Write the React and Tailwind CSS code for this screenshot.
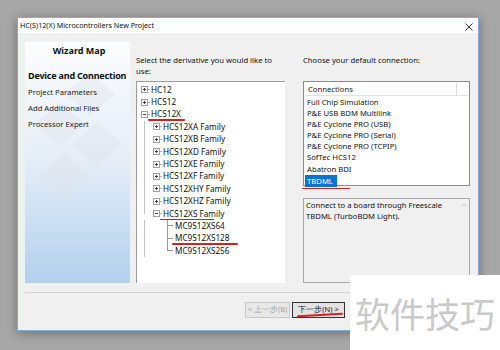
import React from "react";

const font = { fontFamily: '"Noto Sans", "Liberation Sans", sans-serif' };

const tree = [
    { label: "HC12", level: 0, box: "+" },
    { label: "HCS12", level: 0, box: "+" },
    { label: "HCS12X", level: 0, box: "-", mark: "w-[37px]" },
    { label: "HCS12XA Family", level: 1, box: "+" },
    { label: "HCS12XB Family", level: 1, box: "+" },
    { label: "HCS12XD Family", level: 1, box: "+" },
    { label: "HCS12XE Family", level: 1, box: "+" },
    { label: "HCS12XF Family", level: 1, box: "+" },
    { label: "HCS12XHY Family", level: 1, box: "+" },
    { label: "HCS12XHZ Family", level: 1, box: "+" },
    { label: "HCS12XS Family", level: 1, box: "-", last: true, mark: "w-[54px]" },
    { label: "MC9S12XS64", level: 2 },
    { label: "MC9S12XS128", level: 2, mark: "w-[66px]" },
    { label: "MC9S12XS256", level: 2, last: true },
];

const connections = [
    "Full Chip Simulation",
    "P&E USB BDM Multilink",
    "P&E Cyclone PRO (USB)",
    "P&E Cyclone PRO (Serial)",
    "P&E Cyclone PRO (TCPIP)",
    "SofTec HCS12",
    "Abatron BDI",
];

const ExpandBox = ({ sign }) => (
    <span className="relative flex h-[7px] w-[7px] shrink-0 items-center justify-center border border-[#a0a0a0] bg-white">
        <span className="absolute h-px w-[3px] bg-[#444]" />
        {sign === "+" && <span className="absolute h-[3px] w-px bg-[#444]" />}
    </span>
);

const TreeRow = ({ item }) => (
    <div className="relative flex h-[12.4px] items-center">
        {/* linea vertical del padre HCS12X */}
        {item.level >= 1 && (
            <span className={`absolute left-[7px] top-0 w-px bg-[#c4c4c4] ${item.level === 1 && item.last ? "h-1/2" : "h-full"}`} />
        )}
        <span className={item.level === 0 ? "w-[4px]" : item.level === 1 ? "w-[16px]" : "w-[28px]"} />
        {item.level === 2 ? (
            <span className="relative flex h-full w-[9px] shrink-0 items-center">
                <span className={`absolute left-[2px] top-0 w-px bg-[#9a9a9a] ${item.last ? "h-1/2" : "h-full"}`} />
                <span className="ml-[2px] h-px w-[6px] bg-[#9a9a9a]" />
            </span>
        ) : (
            <>
                <ExpandBox sign={item.box} />
                <span className="h-px w-[2px] bg-[#b0b0b0]" />
            </>
        )}
        <span className="relative ml-px whitespace-nowrap text-[8.2px] leading-none text-[#111]">
            {item.label}
            {item.mark && (
                <span className={`absolute left-[-3px] top-[9px] h-[1.5px] rounded-full bg-[#d62020] ${item.mark}`} />
            )}
        </span>
    </div>
);

const App = () => {
    return (
        <main className="relative h-[350px] w-[500px] overflow-hidden bg-[#a7a7a7] pl-[17px] pt-[17px]" style={font}>
            <div className="flex h-[314px] w-[462px] flex-col border border-[#86acd6] bg-[#f0f0f0] shadow-[0_2px_10px_rgba(0,0,0,0.35)]">
                {/* barra de titulo */}
                <div className="flex h-[15px] items-center justify-between bg-white pl-[2px] pr-[5px]">
                    <span className="text-[7.2px] leading-none text-[#111]">HC(S)12(X) Microcontrollers New Project</span>
                    <svg width="8" height="8" viewBox="0 0 8 8" className="mt-[2px]">
                        <path d="M0.5 0.5 L7.5 7.5 M7.5 0.5 L0.5 7.5" stroke="#222" strokeWidth="0.9" />
                    </svg>
                </div>

                <div className="flex pl-[7px] pt-[9px]">
                    {/* Wizard Map */}
                    <div className="relative flex h-[241px] w-[105px] flex-col bg-linear-to-b from-[#fcfdfe] via-[#e4edf7] to-[#b2d0ed] pl-[3px]">
                        <svg className="absolute left-[10px] top-[30px]" width="90" height="140" viewBox="0 0 90 140">
                            <g fill="#dfe4ea" opacity="0.4">
                                <path d="M55 0 L80 22 L55 44 L30 22 Z" />
                                <path d="M25 30 L50 52 L25 74 L0 52 Z" />
                                <path d="M62 50 L87 72 L62 94 L37 72 Z" />
                                <path d="M30 80 L55 102 L30 124 L5 102 Z" />
                            </g>
                        </svg>
                        <span className="relative pt-[3px] text-center text-[9px] font-bold leading-[12px] text-[#111]">Wizard Map</span>
                        <span className="relative mt-[13px] whitespace-nowrap text-[9px] font-bold leading-[12px] tracking-[-0.2px] text-[#111]">
                            Device and Connection
                        </span>
                        <span className="relative mt-[4px] text-[7.7px] leading-[12px] text-[#222]">Project Parameters</span>
                        <span className="relative mt-[4px] text-[7.7px] leading-[12px] text-[#222]">Add Additional Files</span>
                        <span className="relative mt-[4px] text-[7.7px] leading-[12px] text-[#222]">Processor Expert</span>
                    </div>

                    {/* derivado */}
                    <div className="ml-[6px] flex w-[149px] flex-col">
                        <p className="h-[39px] pt-[13px] text-[7.7px] leading-[11px] text-[#111]">
                            Select the derivative you would like to use:
                        </p>
                        <div className="h-[202px] border-l border-t border-[#9c9c9c] bg-white pt-[1.5px]">
                            {tree.map((item) => (
                                <TreeRow key={item.label} item={item} />
                            ))}
                        </div>
                    </div>

                    {/* conexion */}
                    <div className="ml-[18px] flex w-[167px] flex-col">
                        <p className="h-[39px] pt-[13px] text-[7.7px] leading-[11px] text-[#111]">
                            Choose your default connection:
                        </p>
                        <div className="flex h-[105px] flex-col border border-[#8c8c8c] bg-white">
                            <div className="mx-px mt-px flex h-[13px] border-b border-[#e2e2e2]">
                                <span className="w-[152px] border-r border-[#dcdcdc] pl-[3px] text-[7.7px] leading-[13px] text-[#222]">
                                    Connections
                                </span>
                            </div>
                            <div className="pl-[1px] pt-[0.5px]">
                                {connections.map((c) => (
                                    <div key={c} className="h-[11.2px] pl-[2px] text-[7.7px] leading-[11.2px] text-[#111]">
                                        {c}
                                    </div>
                                ))}
                                <div className="relative w-[32px] bg-[#0a74d6] pl-[2px] text-[7.7px] leading-[12px] text-white">
                                    TBDML
                                    <span className="absolute left-[-3px] top-[13px] h-[1.5px] w-[48px] rounded-full bg-[#d62020]" />
                                </div>
                            </div>
                        </div>
                        <div className="mt-[12px] flex h-[85px] border border-[#a8a8a8] bg-[#f0f0f0]">
                            <p className="flex-1 pl-[2px] pt-[1px] text-[7.7px] leading-[11px] text-[#111]">
                                Connect to a board through Freescale TBDML (TurboBDM Light).
                            </p>
                            <div className="flex w-[10px] justify-center pt-[4px]">
                                <svg width="6" height="4" viewBox="0 0 6 4">
                                    <path d="M0.5 3.5 L3 1 L5.5 3.5" fill="none" stroke="#c2c2c2" strokeWidth="0.9" />
                                </svg>
                            </div>
                        </div>
                    </div>
                </div>

                <div className="mx-[7px] mt-[9px] border-t border-[#d2d2d2]" />

                {/* botones */}
                <div className="mt-[9px] flex gap-[2px] pl-[227px]">
                    <button className="h-[16px] w-[45px] border border-[#c8c8c8] bg-[#e8e8e8] text-[7.5px] text-[#a3a3a3]">
                        &lt; 上一步(B)
                    </button>
                    <button className="relative h-[16px] w-[53px] border border-[#333] bg-[#e3e3e3] text-[7.5px] text-[#111]">
                        下一步(N) &gt;
                        <span className="absolute left-[4px] top-[11px] h-[1.5px] w-[46px] -rotate-3 rounded-full bg-[#d62020]" />
                    </button>
                </div>
            </div>

            {/* marca de agua */}
            <div className="absolute left-[350px] top-[275px] flex h-[75px] w-[150px] items-center justify-center bg-white">
                <span
                    className="text-[35px] leading-none text-[#c9c9c9]"
                    style={{ fontFamily: '"Noto Sans CJK SC", sans-serif' }}
                >
                    软件技巧
                </span>
            </div>
        </main>
    );
};

export default App;
